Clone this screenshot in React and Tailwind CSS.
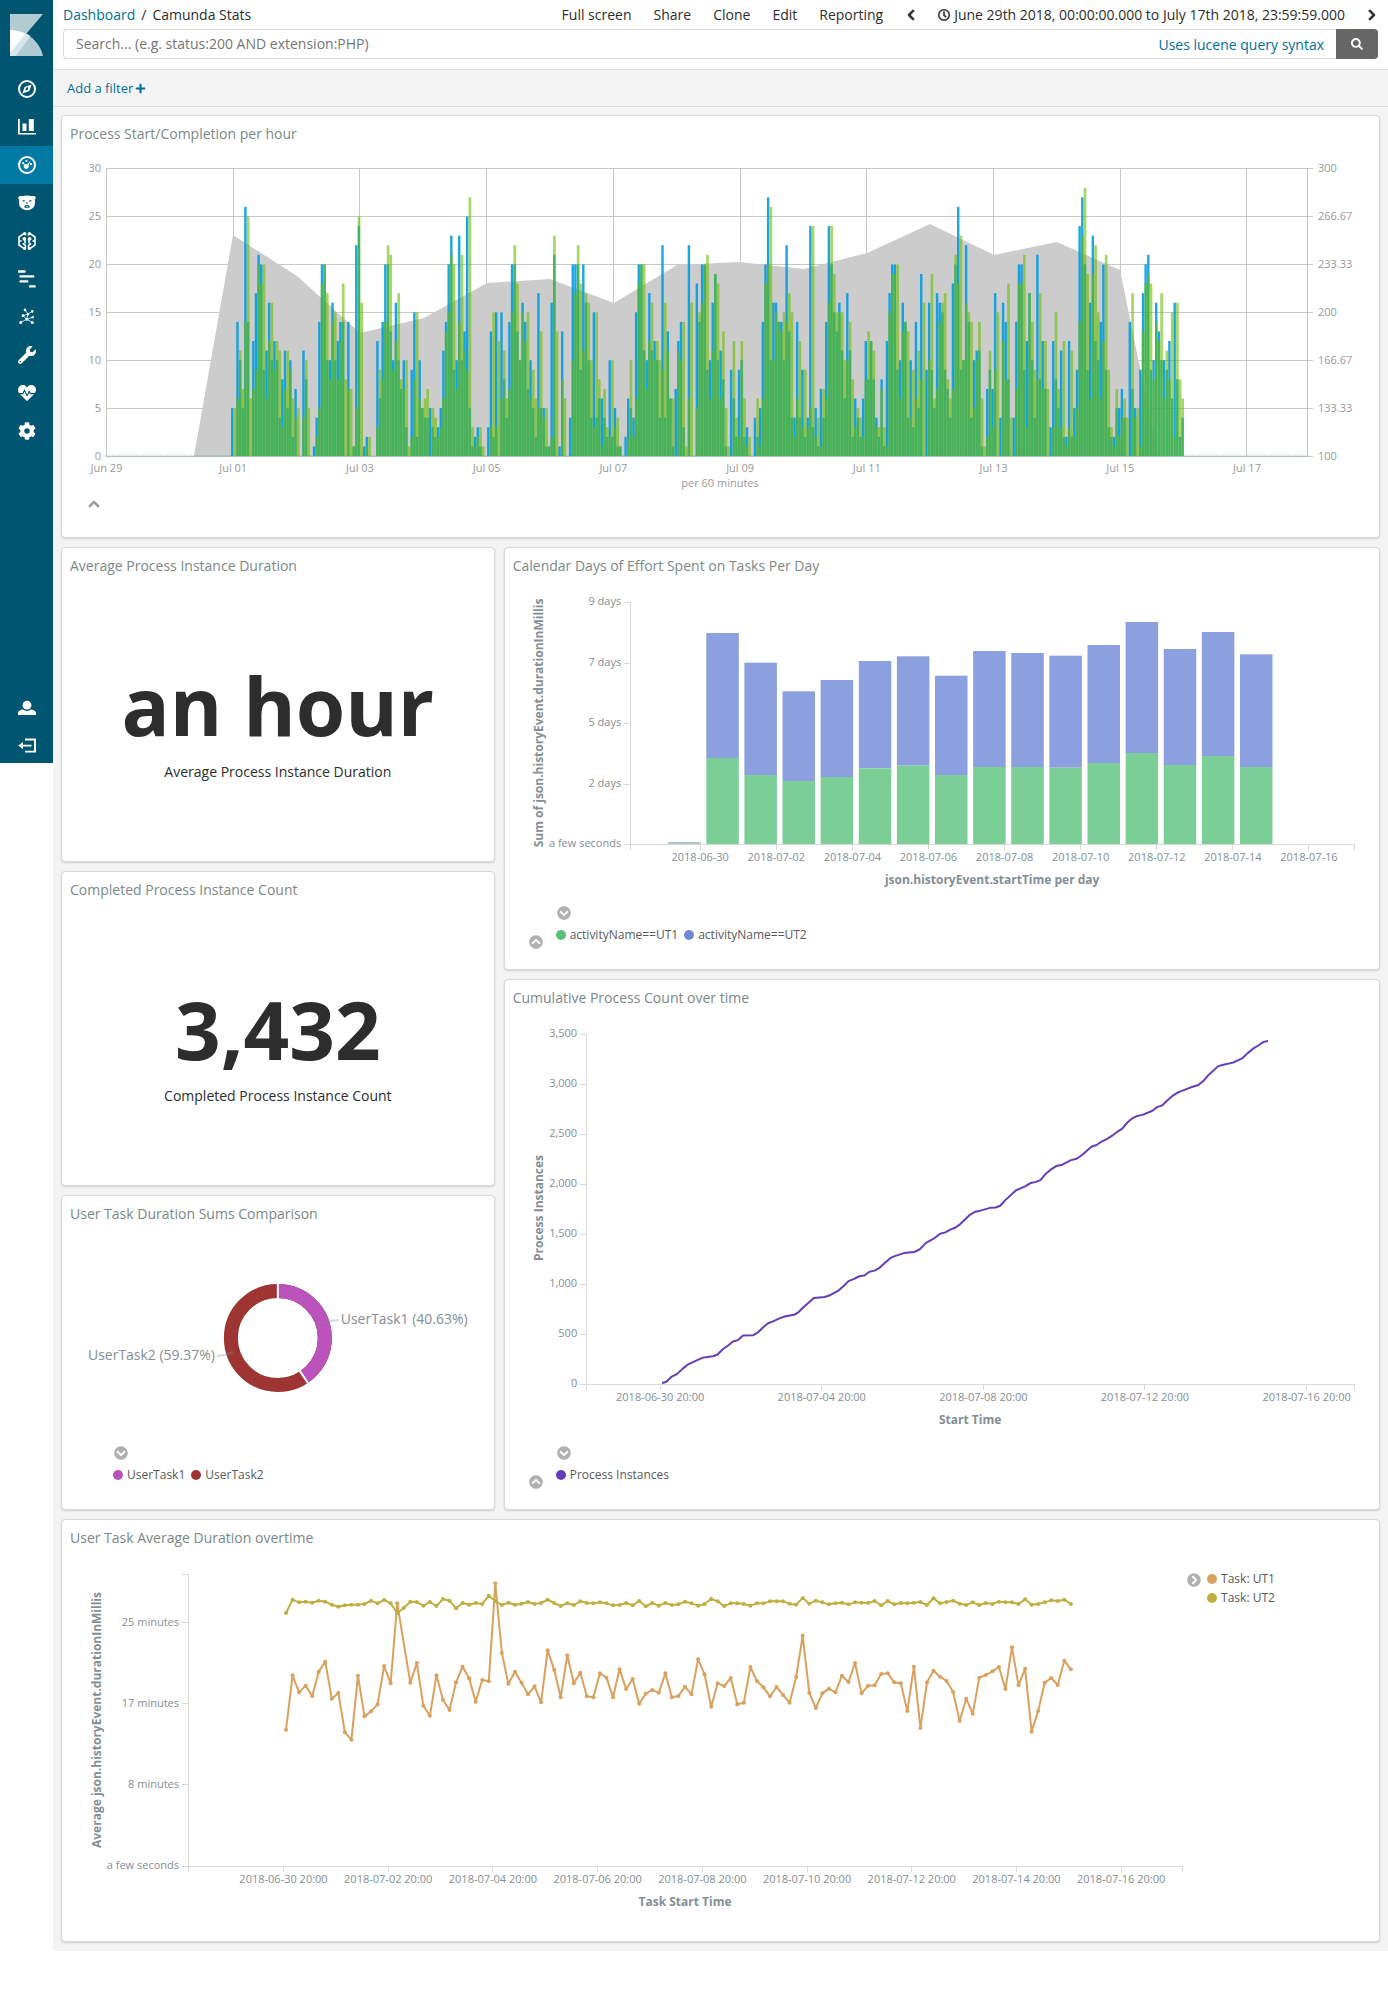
import React from 'react'
import {
  FaChevronCircleDown,
  FaChevronCircleRight,
  FaChevronCircleUp,
  FaChevronLeft,
  FaChevronRight,
  FaChevronUp,
  FaCog,
  FaHeartbeat,
  FaPlus,
  FaRegClock,
  FaSearch,
  FaWrench,
} from 'react-icons/fa'

/* Hourly counts from Jul 01. The letter tells which series is higher
   (b: started, g: completed), then come the higher and the lower value. */
const HOURLY = `
b5.0 g5.0 b14.6 g11.10 g7.5 b26.14 g25.14 g6.0 b12.7 b17.9 b21.20 b20.18 g20.9 b11.6 b16.12 g16.10 b12.9 g12.10 g11.4 b8.3
b11.7 g11.5 b10.9 g6.2 b7.4 g5.0 g0.0 b11.4 g10.8 g5.0 g0.0 b1.0 b4.2 b14.5 b20.18 g20.20 g17.10 b10.8 b16.14 g15.10
b12.8 b14.12 g18.14 g8.0 b14.7 g7.0 g1.1 b22.5 g25.24 g16.0 b1.0 b2.1 g2.0 g0.0 g0.0 b12.3 g9.6 b14.8 b20.14 g22.20
g21.13 b10.9 b16.12 g17.10 g8.7 b10.7 g10.3 g1.0 b9.2 b15.8 g15.2 b10.6 g5.5 g6.4 g7.4 b5.0 g5.3 g4.2 b3.2 b5.3
b11.6 b14.13 b20.15 b23.21 g20.9 b10.7 b23.14 g21.10 b13.11 b25.9 g27.5 g3.1 b2.1 b3.2 g3.1 g1.0 g0.0 b3.0 b13.3 g15.2
b15.3 g12.0 b15.6 g11.8 g6.4 b14.7 b20.15 g22.20 g18.13 g10.10 b16.15 b14.12 g15.7 b10.6 g9.5 g6.2 b17.5 g13.5 b5.4 g5.1
g1.1 b16.2 g23.21 g13.0 b1.0 b13.8 g6.0 g0.0 b4.0 b20.10 b20.17 g22.20 g18.9 b20.11 g17.16 g16.10 g10.4 b15.3 g15.4 g8.6
b6.1 g7.4 g3.2 b10.2 g10.2 b5.3 g4.1 g1.1 g0.0 b2.0 b6.2 g10.5 b4.2 b15.6 b20.18 g20.20 g20.11 b10.7 b17.12 g16.11
b12.10 g12.10 g10.4 b22.9 g16.4 b13.11 g6.6 g6.1 b7.0 b12.11 b14.10 g14.3 g1.0 b22.6 g16.0 g0.0 b18.5 g15.14 b20.16 g20.20
g21.9 b10.6 b16.11 g19.19 g18.10 b11.6 g13.8 g5.1 g1.0 b9.0 g12.6 g4.2 b9.2 g12.10 g6.2 b3.1 g2.0 g0.0 b4.0 g6.2
b5.1 b14.6 b20.18 b27.20 g26.10 b16.10 b16.15 g14.14 b14.13 g15.10 b22.14 g17.13 g15.4 b4.2 b14.6 g12.4 b9.3 g9.2 b4.3 b24.5
g24.3 b5.2 g4.1 b7.1 g7.4 b14.6 b24.16 g24.20 g19.15 g15.13 b16.15 g15.11 g10.6 b17.10 g14.11 g8.2 b6.3 g5.4 g4.2 b6.2
b12.8 g13.8 g12.12 g11.8 b4.3 g3.2 b8.7 g3.1 b12.1 b17.15 b20.19 b20.19 g20.9 b10.6 b16.13 g14.14 g13.4 b10.4 g9.3 b14.6
g11.5 b19.8 g16.0 b9.0 b16.10 g19.9 g6.5 b17.7 b16.14 g16.15 g17.9 g8.7 g6.4 b18.7 g21.20 b26.18 g23.9 g10.10 b22.16 g15.14
g14.4 b10.5 b11.10 g14.11 g6.1 g1.0 b7.2 g11.9 b7.3 b17.9 g15.0 b4.0 b16.12 b14.8 g18.8 g4.0 b4.0 b14.7 b20.18 b20.18
g21.9 b12.3 g17.17 g14.10 g9.4 b21.8 g17.8 b12.7 g12.7 g7.0 b3.0 b12.3 g15.8 g7.5 b11.3 g12.2 b2.1 b12.3 g11.2 b5.2
b9.5 b24.14 b27.23 g28.20 g19.9 b16.6 b23.19 g22.12 g15.10 b14.6 b20.12 g21.9 g9.3 g3.2 b2.1 g7.5 b5.2 b7.4 g6.4 g4.0
b14.0 g17.7 b5.4 g5.0 b9.1 b17.13 b20.18 b21.19 g18.9 b10.8 b16.14 b13.12 g17.10 b10.6 g11.9 b12.8 g15.6 b16.2 g16.8 g8.2
g6.4`
  .trim()
  .split(/\s+/)
  .map((t) => {
    const [hi, lo] = t.slice(1).split('.').map(Number)
    return t[0] === 'b' ? [hi, lo] : [lo, hi]
  })

const DAILY_AREA =
  '194,456 233,235 297,276 360,333 424,318 487,283 550,279 614,303 677,265 740,262 804,269 867,253 930,224 994,255 1057,242 1120,270 1158,456'

const EFFORT = [
  [907, 910], [279, 654], [368, 705], [454, 723], [420, 711], [363, 685], [349, 677], [407, 705],
  [333, 681], [339, 681], [347, 683], [315, 669], [246, 639], [327, 675], [276, 648], [343, 681],
]

const CUMULATIVE =
  '286,1178 294,1173 303,1159 312,1152 322,1137 332,1124 347,1113 358,1105 366,1103 376,1101 384,1096 393,1081 402,1071 411,1059 420,1055 429,1042 447,1041 456,1032 464,1019 473,1007 483,1001 493,993 504,987 519,983 527,975 535,962 554,935 573,932 581,928 598,913 607,900 615,887 624,881 634,873 643,871 652,860 661,857 670,849 680,834 690,820 698,815 713,807 731,804 741,796 752,778 767,764 777,752 786,748 795,740 804,734 812,725 830,697 839,689 848,686 865,678 875,677 883,672 892,656 911,628 928,616 937,607 946,604 954,599 964,580 974,567 982,559 991,556 1008,542 1018,538 1027,528 1036,515 1044,504 1053,499 1062,489 1071,482 1080,473 1090,461 1098,453 1108,434 1117,422 1125,416 1134,413 1151,402 1160,391 1169,386 1178,372 1188,358 1197,349 1214,338 1224,332 1233,328 1243,314 1251,299 1268,274 1277,270 1294,264 1311,251 1320,237 1329,225 1338,216 1348,205 1356,202'

const UT1 = [
  659, 496, 547, 527, 558, 485, 455, 566, 549, 667, 689, 497, 619, 604, 583, 468, 520, 280, null, 518, 459, 587, 617,
  496, 570, 600, 517, 470, 505, 575, 510, 514, 220, 429, 521, 485, 518, 553, 529, 577, 421, 479, 562, 436, 520, 488,
  559, 562, 490, 503, 562, 478, 537, 507, 581, 551, 540, 548, 490, 562, 558, 530, 553, 448, 493, 590, 520, 528, 504,
  583, 578, 471, 513, 532, 559, 531, 555, 578, 501, 377, 548, 594, 550, 536, 547, 497, 516, 459, 550, 527, 526, 492,
  490, 517, 520, 603, 470, 654, 517, 482, 500, 513, 546, 633, 566, 611, 503, 495, 484, 471, 537, 412, 526, 476, 665,
  603, 518, 504, 525, 452, 478,
]
const UT2 = [
  309, 269, 277, 275, 278, 272, 275, 284, 290, 286, 284, 284, 282, 272, 280, 270, 280, 309, 294, 275, 276, 287, 276,
  288, 267, 272, 295, 279, 284, 279, 282, 257, 273, 285, 278, 284, 281, 276, 282, 279, 269, 279, 288, 280, 285, 274,
  279, 280, 277, 280, 286, 285, 279, 286, 273, 289, 279, 287, 279, 285, 283, 275, 280, 287, 282, 267, 274, 288, 280,
  280, 282, 287, 280, 280, 274, 274, 274, 281, 284, 264, 281, 272, 277, 283, 280, 278, 283, 277, 278, 279, 273, 286,
  273, 283, 279, 280, 278, 276, 285, 265, 280, 276, 272, 281, 285, 277, 285, 279, 282, 275, 277, 277, 282, 268, 284,
  282, 277, 271, 273, 269, 282,
]

/* ---------- sidebar ---------- */

const Icon = ({ children }) => (
  <svg viewBox="0 0 18 18" className="size-[18px]" fill="currentColor" aria-hidden="true">
    {children}
  </svg>
)

const CompassIcon = () => (
  <Icon>
    <circle cx="9" cy="9" r="8" fill="none" stroke="currentColor" strokeWidth="2" />
    <path fillRule="evenodd" d="M13.600 4.400 11.400 11l-7 2.600L6.600 7l7-2.600ZM9.800 6.800 8 8 7.400 10.700 10 9.600Z" />
  </Icon>
)
const VisualizeIcon = () => (
  <Icon>
    <path d="M0 1h1.800v14h16.200v1.600H0zM4.500 5.500h4V13h-4zM10.800 1h5v12h-5z" />
  </Icon>
)
const DashboardIcon = () => (
  <Icon>
    <circle cx="9" cy="9" r="8" fill="none" stroke="currentColor" strokeWidth="2" />
    <circle cx="5.200" cy="7.200" r="1.100" />
    <circle cx="8.400" cy="5" r="1.100" />
    <circle cx="13" cy="8.200" r="1.100" />
    <path d="M12.400 4.800 10.700 9.600a2.600 2.600 0 1 1-4-1.500c1-.4 2 .1 2.500.4z" />
  </Icon>
)
const BearIcon = () => (
  <Icon>
    <path
      fillRule="evenodd"
      d="M.4 3.200C.8 2 2.400 1.500 4 2.200c3.300-.9 6.700-.9 10 0 1.600-.7 3.200-.2 3.600 1 .3 1-.1 2-.9 2.600.5 2.600.4 5.200-.9 7.300C14.300 15.200 11.800 16.200 9 16.200s-5.300-1-6.800-3.100C.9 11 .8 8.400 1.300 5.800.5 5.200.1 4.200.4 3.200ZM4.600 6.200v1.200h2.200V6.200Zm6.600 0v1.200h2.200V6.200ZM8 8.600h2v.9H8Zm-1.500 3.300v1.900h5v-1.900l-1.400-1H7.900Z"
    />
    <path d="M8.200 11.800h1.600v.9H8.200z" />
  </Icon>
)
const MachineLearningIcon = () => (
  <Icon>
    <g fill="none" stroke="currentColor" strokeWidth="1.600">
      <path d="M6.500 1.200 1 5v8l5.500 3.800M11.500 1.200 17 5v8l-5.500 3.800" />
      <path d="M7.400 1v2.600M10.600 1v2.600M7.400 17v-3.600L4.800 11.400M10.600 17v-3.600l2.600-2" />
      <path d="M7 7v4.400M11 7v4.400M1 9h2.600M14.400 9H17" />
    </g>
    <circle cx="6.400" cy="6.800" r="1.900" />
    <circle cx="11.600" cy="6.800" r="1.900" />
    <circle cx="6.600" cy="1.600" r="1.500" />
    <circle cx="11.400" cy="1.600" r="1.500" />
    <circle cx="6.600" cy="16.400" r="1.500" />
    <circle cx="11.400" cy="16.400" r="1.500" />
  </Icon>
)
const TimelineIcon = () => (
  <Icon>
    <g stroke="currentColor" strokeWidth="2.400" strokeLinecap="round">
      <path d="M.6 1.500h6M2.600 6.400h12.600M2.600 11.400h6.600M12 16.400h4.600" />
    </g>
  </Icon>
)
const GraphIcon = () => (
  <Icon>
    <path
      d="M7 1.700 10 6 14.300 3.300M10 6l-5 1.700 3.700 3.600 6-2M10 6l-1.300 5.300-6 3M8.700 11.300l5.600 3"
      fill="none"
      stroke="currentColor"
      strokeWidth=".8"
    />
    <circle cx="7" cy="1.900" r="1.300" />
    <circle cx="14.300" cy="3.400" r="1.300" />
    <circle cx="5" cy="7.700" r="1.400" />
    <circle cx="10" cy="6.200" r="1.300" />
    <circle cx="14.700" cy="9.300" r="1.300" />
    <circle cx="8.700" cy="11.200" r="1.500" />
    <circle cx="2.700" cy="14.400" r="1.500" />
    <circle cx="14.300" cy="14.400" r="1.500" />
  </Icon>
)
const UserIcon = () => (
  <Icon>
    <circle cx="9" cy="6.200" r="4.400" />
    <path d="M0 16v-2c0-2 3-3.200 5-3.400 2 1.700 6 1.700 8 0 2 .2 5 1.400 5 3.400v2z" />
  </Icon>
)
const LogoutIcon = () => (
  <Icon>
    <path d="M7 2.500h11v14H7v-1.800h9V4.400H7z" />
    <path d="M13.500 8.700H5V6L.3 9.600 5 13.200v-2.700h8.500z" />
  </Icon>
)

const NAV = [
  ['Discover', CompassIcon],
  ['Visualize', VisualizeIcon],
  ['Dashboard', DashboardIcon],
  ['Timelion', BearIcon],
  ['Machine Learning', MachineLearningIcon],
  ['APM', TimelineIcon],
  ['Graph', GraphIcon],
  ['Dev Tools', () => <FaWrench className="size-[18px] -scale-x-100 rotate-90" />],
  ['Monitoring', () => <FaHeartbeat className="size-[18px]" />],
  ['Management', () => <FaCog className="size-[18px]" />],
]

function Sidebar() {
  return (
    <nav className="flex h-[763px] w-[53px] shrink-0 flex-col bg-[#005571] text-white">
      <a href="#home" aria-label="Kibana" className="block h-[70px] pt-[14px] pl-[10px]">
        <svg viewBox="0 0 33 42" className="h-[42px] w-[33px]" aria-hidden="true">
          <path d="M0 0h33L0 39z" fill="#b3ccd4" />
          <path d="M0 16c14 0 29 9 33 26H0z" fill="#b3ccd4" />
          <path d="M16 19.600c2 .8 3 1.400 4.500 2.400L6 42H0v-3z" fill="#d9e5ea" />
          <path d="M0 16c6 0 11 1.500 16 3.700L0 39z" fill="#fff" />
        </svg>
      </a>
      {NAV.map(([name, Glyph]) => (
        <a
          key={name}
          href={'#' + name.toLowerCase().replace(' ', '-')}
          aria-label={name}
          className={
            name === 'Dashboard'
              ? 'flex h-[38px] items-center justify-center bg-[#0079a5]'
              : 'flex h-[38px] items-center justify-center'
          }
        >
          <Glyph />
        </a>
      ))}
      <a href="#user" aria-label="Account" className="mt-auto flex h-[37px] items-center justify-center">
        <UserIcon />
      </a>
      <a href="#logout" aria-label="Log out" className="flex h-[37px] items-center justify-center">
        <LogoutIcon />
      </a>
    </nav>
  )
}

/* ---------- top bar ---------- */

function TopBar() {
  return (
    <header className="h-[70px] border-b border-[#d9d9d9] bg-white px-[10px] text-[14px] text-[#2d2d2d]">
      <div className="flex h-[29px] items-center justify-between">
        <div className="flex gap-[6px]">
          <a href="#dashboards" className="text-[#006e9c]">
            Dashboard
          </a>
          <span>/</span>
          <span>Camunda Stats</span>
        </div>
        <div className="flex items-center">
          <div className="mr-[22px] flex gap-[22px]">
            {['Full screen', 'Share', 'Clone', 'Edit', 'Reporting'].map((t) => (
              <button key={t} type="button">
                {t}
              </button>
            ))}
          </div>
          <button type="button" aria-label="Previous period" className="mr-[21px]">
            <FaChevronLeft className="size-3 stroke-current stroke-[40px]" />
          </button>
          <button type="button" className="mr-[21px] flex items-center gap-1">
            <FaRegClock className="size-3 stroke-current stroke-[20px]" />
            June 29th 2018, 00:00:00.000 to July 17th 2018, 23:59:59.000
          </button>
          <button type="button" aria-label="Next period">
            <FaChevronRight className="size-3 stroke-current stroke-[40px]" />
          </button>
        </div>
      </div>
      <form className="flex h-[30px]" onSubmit={(e) => e.preventDefault()}>
        <div className="flex flex-1 items-center rounded-l border border-r-0 border-[#d9d9d9] px-3">
          <input
            type="text"
            aria-label="Search"
            placeholder="Search... (e.g. status:200 AND extension:PHP)"
            className="min-w-0 flex-1 bg-transparent pb-0.5 outline-none placeholder:text-[#757575]"
          />
          <a href="#lucene" className="text-[#006e9c]">
            Uses lucene query syntax
          </a>
        </div>
        <button type="submit" aria-label="Search" className="flex w-[42px] items-center justify-center rounded-r bg-[#666] text-white">
          <FaSearch className="size-3" />
        </button>
      </form>
    </header>
  )
}

/* ---------- panel parts ---------- */

function Panel({ title, className, children }) {
  return (
    <section className={'flex flex-col rounded border border-[#d9d9d9] bg-white shadow-[0_1px_2px_rgba(0,0,0,0.15)] ' + className}>
      <h2 className="h-8 shrink-0 pt-2 pl-2 text-[14px] leading-5 text-[#7b8888]">{title}</h2>
      {children}
    </section>
  )
}

const Dot = ({ color, children }) => (
  <button type="button" className="flex items-center gap-1">
    <svg viewBox="0 0 10 10" className="size-[10px]" aria-hidden="true">
      <circle cx="5" cy="5" r="5" fill={color} />
    </svg>
    {children}
  </button>
)

function BottomLegend({ collapse, items }) {
  return (
    <div className="flex h-[69px] shrink-0 text-[12px] leading-4 text-[#5a5a5a]">
      <div className="flex w-[51px] justify-center pt-[35px] pl-3 text-[#b0b0b0]">
        {collapse && (
          <button type="button" aria-label="Collapse legend" className="size-[14px]">
            <FaChevronCircleUp className="size-[14px]" />
          </button>
        )}
      </div>
      <div className="pt-[6px]">
        <button type="button" aria-label="Toggle legend" className="block pl-px text-[#b0b0b0]">
          <FaChevronCircleDown className="size-[14px]" />
        </button>
        <div className="mt-[7px] flex gap-[6px]">
          {items.map(([label, color]) => (
            <Dot key={label} color={color}>
              {label}
            </Dot>
          ))}
        </div>
      </div>
    </div>
  )
}

const AXIS = '#d9d9d9'
const tick = 'fill-[#848e96] text-[11px]'
const axisTitle = 'fill-[#848e96] text-[12px] font-bold'

function AxisTitle({ x, y, children }) {
  return (
    <text transform={`translate(${x} ${y}) rotate(-90)`} textAnchor="middle" className={axisTitle}>
      {children}
    </text>
  )
}

/* ---------- charts ---------- */

function HourlyChart() {
  const x0 = 106.5
  const day = 63.36
  const step = day / 24
  const unit = 9.58
  return (
    <svg viewBox="62 148 1317 342" className="block w-full" role="img" aria-label="Process starts and completions per hour">
      <g stroke="#c8c8c8" shapeRendering="crispEdges">
        {[0, 1, 2, 3, 4, 5].map((i) => (
          <path key={i} d={`M106 ${168.5 + i * 47.9}H1307`} />
        ))}
        <path d="M106 456.500H1307" />
        {[0, 2, 4, 6, 8, 10, 12, 14, 16, 18].map((d) => (
          <path key={d} d={`M${x0 + d * day} 168V456`} />
        ))}
        <path d="M1307.500 168V457" />
        {[0, 1, 2, 3, 4, 5, 6].map((i) => (
          <path key={i} d={`M1307 ${168.5 + i * 48}H1313`} />
        ))}
      </g>
      <polygon points={DAILY_AREA} fill="#ccc" />
      <path d="M106 456H1307" stroke="#3cb271" strokeOpacity=".6" strokeDasharray="2 1" />
      <g fill="#009ce0" fillOpacity=".9">
        {HOURLY.map(([b], i) =>
          b ? <rect key={i} x={231 + i * step} y={456 - b * unit} width="2.400" height={b * unit} /> : null,
        )}
      </g>
      <g fill="#68bc00" fillOpacity=".6">
        {HOURLY.map(([, g], i) =>
          g ? <rect key={i} x={231 + i * step} y={456 - g * unit} width="2.640" height={g * unit} /> : null,
        )}
      </g>
      <g className="fill-[#999] text-[11px]">
        {[30, 25, 20, 15, 10, 5, 0].map((v, i) => (
          <text key={v} x="101" y={172 + i * 48} textAnchor="end">
            {v}
          </text>
        ))}
        {['300', '266.67', '233.33', '200', '166.67', '133.33', '100'].map((v, i) => (
          <text key={v} x="1318" y={172 + i * 48}>
            {v}
          </text>
        ))}
        {['Jun 29', 'Jul 01', 'Jul 03', 'Jul 05', 'Jul 07', 'Jul 09', 'Jul 11', 'Jul 13', 'Jul 15', 'Jul 17'].map((v, i) => (
          <text key={v} x={x0 + i * 2 * day} y="472" textAnchor="middle">
            {v}
          </text>
        ))}
        <text x="720" y="487" textAnchor="middle">
          per 60 minutes
        </text>
      </g>
    </svg>
  )
}

function EffortChart() {
  return (
    <svg viewBox="505 580 874 320" className="block w-full flex-1" role="img" aria-label="Effort per day">
      <g stroke={AXIS} shapeRendering="crispEdges">
        <path d="M630.500 602V850M624 844.500H1354.500V850" fill="none" />
        {[602, 663, 723, 784].map((y) => (
          <path key={y} d={`M624 ${y + 0.5}H630`} />
        ))}
        {[0, 1, 2, 3, 4, 5, 6, 7, 8].map((i) => (
          <path key={i} d={`M${700 + i * 76.1} 844V850`} />
        ))}
      </g>
      {EFFORT.map(([top, mid], i) => (
        <g key={i}>
          <rect x={668 + i * 38.12} y={540 + top / 3} width="32.500" height={(mid - top) / 3} fill="#8c9fde" />
          <rect x={668 + i * 38.12} y={540 + mid / 3} width="32.500" height={304 - mid / 3} fill="#7bcf96" />
        </g>
      ))}
      <g className={tick}>
        {['9 days', '7 days', '5 days', '2 days', 'a few seconds'].map((t, i) => (
          <text key={t} x="621" y={605 + i * 60.5} textAnchor="end">
            {t}
          </text>
        ))}
        {['06-30', '07-02', '07-04', '07-06', '07-08', '07-10', '07-12', '07-14', '07-16'].map((t, i) => (
          <text key={t} x={700 + i * 76.1} y="861" textAnchor="middle">
            {'2018-' + t}
          </text>
        ))}
      </g>
      <text x="992" y="884" textAnchor="middle" className={axisTitle}>
        json.historyEvent.startTime per day
      </text>
      <AxisTitle x={543} y={723}>
        Sum of json.historyEvent.durationInMillis
      </AxisTitle>
    </svg>
  )
}

function CumulativeChart() {
  return (
    <svg viewBox="505 1012 874 428" className="block w-full flex-1" role="img" aria-label="Cumulative process count">
      <g stroke={AXIS} shapeRendering="crispEdges">
        <path d="M586.500 1034V1390M580 1384.500H1354.500V1390" fill="none" />
        {[0, 1, 2, 3, 4, 5, 6].map((i) => (
          <path key={i} d={`M580 ${1034.5 + i * 50}H586`} />
        ))}
        {[0, 1, 2, 3, 4].map((i) => (
          <path key={i} d={`M${660 + i * 161.6} 1384V1390`} />
        ))}
      </g>
      <g transform="translate(500 970) scale(0.5663 0.3508)">
        <polyline
          points={CUMULATIVE}
          fill="none"
          stroke="#663db8"
          strokeWidth="2"
          strokeLinejoin="round"
          vectorEffect="non-scaling-stroke"
        />
      </g>
      <g className={tick}>
        {['3,500', '3,000', '2,500', '2,000', '1,500', '1,000', '500', '0'].map((t, i) => (
          <text key={t} x="577" y={1037 + i * 50} textAnchor="end">
            {t}
          </text>
        ))}
        {['06-30', '07-04', '07-08', '07-12', '07-16'].map((t, i) => (
          <text key={t} x={660 + i * 161.6} y="1401" textAnchor="middle">
            {'2018-' + t + ' 20:00'}
          </text>
        ))}
      </g>
      <text x="970" y="1424" textAnchor="middle" className={axisTitle}>
        Start Time
      </text>
      <AxisTitle x={543} y={1208}>
        Process Instances
      </AxisTitle>
    </svg>
  )
}

function Donut() {
  const r = 47
  const c = 2 * Math.PI * r
  const split = ((40.63 * 3.6 - 90) * Math.PI) / 180
  return (
    <svg viewBox="62 1228 432 212" className="block w-full flex-1" role="img" aria-label="User task duration sums">
      <g fill="none" strokeWidth="14" transform="rotate(-90 278 1338)">
        <circle cx="278" cy="1338" r={r} stroke="#9e3533" />
        <circle cx="278" cy="1338" r={r} stroke="#bc52bc" strokeDasharray={`${c * 0.4063} ${c}`} />
      </g>
      <g stroke="#fff" strokeWidth="2">
        <path d="M278 1280V1300" />
        <path
          d={`M${278 + 38 * Math.cos(split)} ${1338 + 38 * Math.sin(split)}L${278 + 56 * Math.cos(split)} ${1338 + 56 * Math.sin(split)}`}
        />
      </g>
      <g fill="none" stroke="#848e96" strokeOpacity=".35" strokeWidth="2">
        <path d="M323 1324 331 1321 339 1320" />
        <path d="M233 1352 225 1355 217 1356" />
      </g>
      <g className="fill-[#848e96] text-[14px]">
        <text x="341" y="1324">
          UserTask1 (40.63%)
        </text>
        <text x="215" y="1360" textAnchor="end">
          UserTask2 (59.37%)
        </text>
      </g>
    </svg>
  )
}

function Series({ data, color }) {
  const pts = data.map((v, i) => (v === null ? null : [286 + i * 6.54, 1510 + v / 3])).filter(Boolean)
  return (
    <g fill={color}>
      <polyline points={pts.map((p) => p.join(',')).join(' ')} fill="none" stroke={color} strokeWidth="2" strokeLinejoin="round" />
      {pts.map(([x, y]) => (
        <circle key={x} cx={x} cy={y} r="2" />
      ))}
    </g>
  )
}

function DurationChart() {
  return (
    <svg viewBox="62 1552 1122 380" className="block w-[85.2%] shrink-0" role="img" aria-label="Average task duration over time">
      <g stroke={AXIS} shapeRendering="crispEdges">
        <path d="M182 1574.500H188.500V1872M182 1866.500H1182.500V1872" fill="none" />
        {[1622, 1703, 1784].map((y) => (
          <path key={y} d={`M182 ${y + 0.5}H188`} />
        ))}
        {[0, 1, 2, 3, 4, 5, 6, 7, 8].map((i) => (
          <path key={i} d={`M${283.5 + i * 104.7} 1866V1872`} />
        ))}
      </g>
      <Series data={UT1} color="#daa05d" />
      <Series data={UT2} color="#bfaf40" />
      <g className={tick}>
        {['25 minutes', '17 minutes', '8 minutes', 'a few seconds'].map((t, i) => (
          <text key={t} x="179" y={1626 + i * 81} textAnchor="end">
            {t}
          </text>
        ))}
        {['06-30', '07-02', '07-04', '07-06', '07-08', '07-10', '07-12', '07-14', '07-16'].map((t, i) => (
          <text key={t} x={283.5 + i * 104.7} y="1883" textAnchor="middle">
            {'2018-' + t + ' 20:00'}
          </text>
        ))}
      </g>
      <text x="685" y="1906" textAnchor="middle" className={axisTitle}>
        Task Start Time
      </text>
      <AxisTitle x={101} y={1720}>
        Average json.historyEvent.durationInMillis
      </AxisTitle>
    </svg>
  )
}

function Metric({ value, label }) {
  return (
    <div className="flex flex-1 flex-col items-center justify-center pb-[6px] text-[#2d2d2d]">
      <div className="mb-[6px] text-[80px] leading-[102px] font-bold">{value}</div>
      <div className="text-[14px] leading-5">{label}</div>
    </div>
  )
}

export default function App() {
  return (
    <div className="flex items-start bg-white font-['Open_Sans',sans-serif]">
      <Sidebar />
      <div className="min-w-0 flex-1 bg-[#f4f4f4]">
        <TopBar />
        <div className="flex h-[37px] items-center border-b border-[#d9d9d9] pt-px pl-[14px]">
          <button type="button" className="flex items-center gap-[2px] text-[13px] text-[#006e9c]">
            Add a filter <FaPlus className="size-[11px]" />
          </button>
        </div>
        <main className="grid auto-rows-[99px] grid-cols-12 gap-[9px] px-2 pt-2 pb-[9px]">
          <Panel title="Process Start/Completion per hour" className="col-span-12 row-span-4">
            <HourlyChart />
            <button type="button" aria-label="Show legend" className="mt-2 ml-[26px] w-3 text-[#999]">
              <FaChevronUp className="size-3 stroke-current stroke-[40px]" />
            </button>
          </Panel>
          <Panel title="Average Process Instance Duration" className="col-span-4 col-start-1 row-span-3 row-start-5">
            <Metric value="an hour" label="Average Process Instance Duration" />
          </Panel>
          <Panel title="Calendar Days of Effort Spent on Tasks Per Day" className="col-span-8 col-start-5 row-span-4 row-start-5">
            <EffortChart />
            <BottomLegend
              collapse
              items={[
                ['activityName==UT1', '#57c17b'],
                ['activityName==UT2', '#6f87d8'],
              ]}
            />
          </Panel>
          <Panel title="Completed Process Instance Count" className="col-span-4 col-start-1 row-span-3 row-start-8">
            <Metric value="3,432" label="Completed Process Instance Count" />
          </Panel>
          <Panel title="Cumulative Process Count over time" className="col-span-8 col-start-5 row-span-5 row-start-9">
            <CumulativeChart />
            <BottomLegend collapse items={[['Process Instances', '#663db8']]} />
          </Panel>
          <Panel title="User Task Duration Sums Comparison" className="col-span-4 col-start-1 row-span-3 row-start-11">
            <Donut />
            <BottomLegend
              items={[
                ['UserTask1', '#bc52bc'],
                ['UserTask2', '#9e3533'],
              ]}
            />
          </Panel>
          <Panel title="User Task Average Duration overtime" className="col-span-12 row-span-4 row-start-14">
            <div className="flex">
              <DurationChart />
              <div className="flex min-w-0 flex-1 gap-[6px] pt-[17px] pl-[3px] text-[12px] text-[#5a5a5a]">
                <button type="button" aria-label="Toggle legend" className="mt-1 h-[14px] text-[#b0b0b0]">
                  <FaChevronCircleRight className="size-[14px]" />
                </button>
                <div className="flex flex-col leading-[19px]">
                  <Dot color="#daa05d">Task: UT1</Dot>
                  <Dot color="#bfaf40">Task: UT2</Dot>
                </div>
              </div>
            </div>
          </Panel>
        </main>
      </div>
    </div>
  )
}
